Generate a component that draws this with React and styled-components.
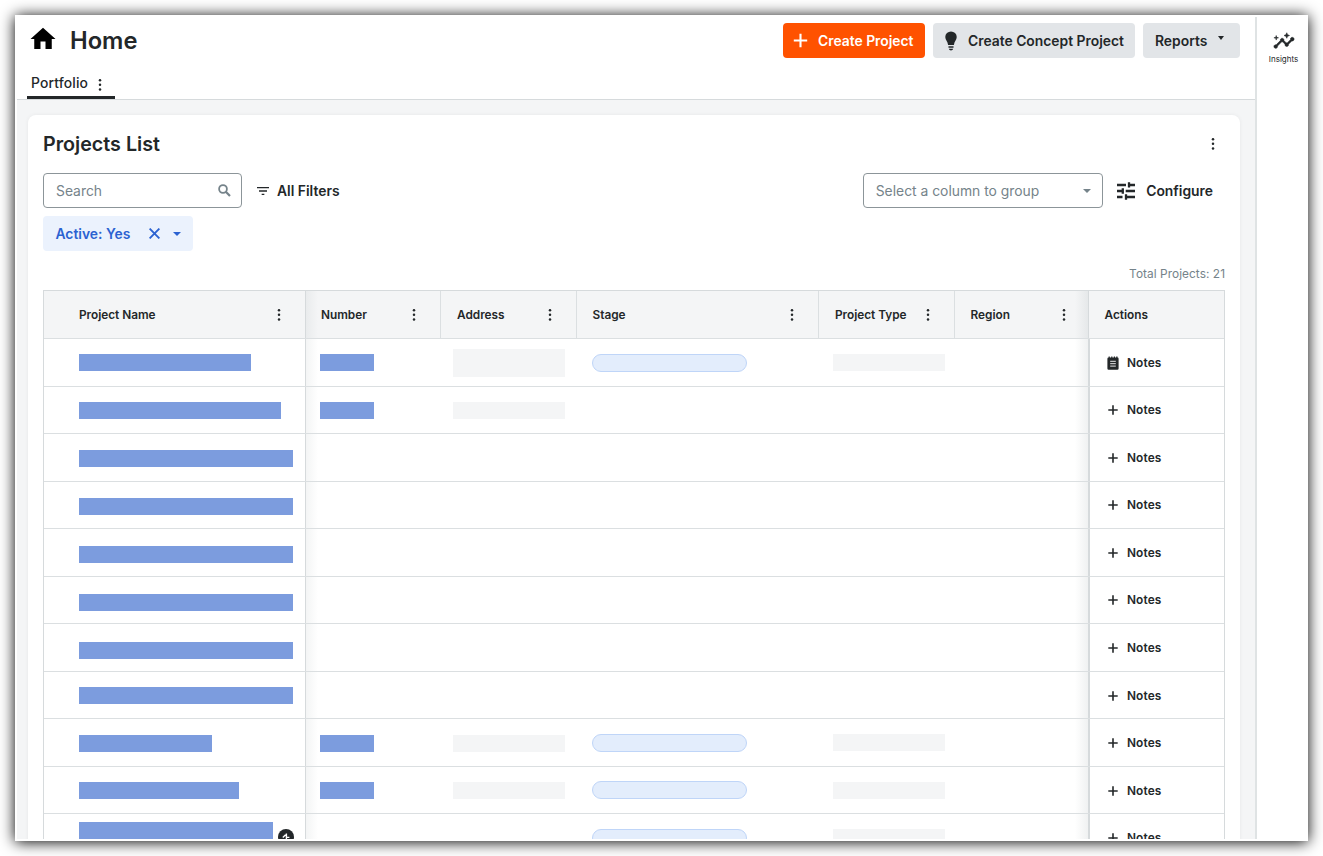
import styled, { createGlobalStyle } from "styled-components";
import { MdFilterList, MdHome, MdInsights } from "react-icons/md";

const GlobalStyle = createGlobalStyle`
  * {
    box-sizing: border-box;
  }

  body {
    margin: 0;
    background: #ffffff;
    color: #232729;
    font-family: Inter, "Liberation Sans", sans-serif;
    overflow: hidden;
  }

  svg {
    display: block;
    flex-shrink: 0;
  }
`;

const Page = styled.div`
  width: 1323px;
  height: 856px;
  padding: 15px;
  overflow: hidden;
`;

const Window = styled.div`
  width: 1293px;
  height: 826px;
  padding: 2px;
  background: #ffffff;
  box-shadow: 0 1px 14px #000000;
`;

const Screen = styled.div`
  display: flex;
  height: 822px;
  overflow: hidden;
`;

const Main = styled.main`
  width: 1238px;
  display: flex;
  flex-direction: column;
`;

const Header = styled.header`
  height: 83px;
  flex-shrink: 0;
  border-bottom: 1px solid #d6dadc;
  display: flex;
  justify-content: space-between;
`;

const HeaderLeft = styled.div`
  display: flex;
  flex-direction: column;
  justify-content: space-between;
  padding-left: 10px;
`;

const TitleRow = styled.div`
  display: flex;
  align-items: center;
  height: 47px;
`;

const HomeIcon = styled(MdHome)`
  color: #000000;
  margin: -4px 12px 0 1px;
`;

const PageTitle = styled.h1`
  margin: 0;
  font-size: 23.7px;
  font-weight: 600;
  line-height: 28px;
`;

const Tab = styled.div`
  width: 88px;
  height: 29px;
  padding-left: 4px;
  border-bottom: 3px solid #232729;
  display: flex;
  align-items: center;
  gap: 3px;
  font-size: 13.87px;
  font-weight: 500;
  letter-spacing: 0.15px;

  svg {
    margin-top: 3px;
  }
`;

const HeaderActions = styled.div`
  display: flex;
  gap: 8px;
  padding: 6px 15px 0 0;
`;

const Button = styled.button`
  width: ${(props) => props.$width}px;
  height: 35px;
  padding: 0 0 0 ${(props) => props.$pad}px;
  border: 0;
  border-radius: 4px;
  display: flex;
  align-items: center;
  gap: ${(props) => props.$gap}px;
  background: ${(props) => (props.$primary ? "#ff5200" : "#e2e5e8")};
  color: ${(props) => (props.$primary ? "#ffffff" : "#232729")};
  font-family: inherit;
  font-size: 13.87px;
  font-weight: 600;
  white-space: nowrap;
`;

const ReportsCaret = styled.span`
  margin: -5px 0 0 1px;
`;

const Content = styled.section`
  flex: 1;
  padding: 15px 15px 0 11px;
  background: #f4f5f6;
`;

const Card = styled.div`
  width: 1212px;
  height: 760px;
  padding: 16px 15px 0 15px;
  border-radius: 8px 8px 0 0;
  background: #ffffff;
  box-shadow: 0 0 4px rgba(35, 39, 41, 0.06);
`;

const CardHeader = styled.div`
  height: 26px;
  padding-right: 3px;
  display: flex;
  align-items: center;
  justify-content: space-between;
`;

const CardTitle = styled.h2`
  margin: 0;
  font-size: 19.7px;
  font-weight: 600;
  line-height: 26px;
`;

const Toolbar = styled.div`
  margin-top: 16px;
  height: 35px;
  padding-right: 12px;
  display: flex;
  align-items: center;
`;

const Field = styled.div`
  width: ${(props) => props.$width}px;
  height: 35px;
  padding: 0 ${(props) => props.$right || 11}px 0 12px;
  border: 1px solid #8c9599;
  border-radius: 4px;
  display: flex;
  align-items: center;
  justify-content: space-between;
  color: #75838a;
  font-size: 13.87px;
`;

const ToolButton = styled.div`
  display: flex;
  align-items: center;
  gap: ${(props) => props.$gap}px;
  margin-left: ${(props) => props.$offset}px;
  font-size: 13.87px;
  font-weight: 600;
`;

const Spacer = styled.div`
  flex: 1;
`;

const FilterChip = styled.div`
  width: 150px;
  height: 35px;
  margin-top: 8px;
  padding-left: 12.5px;
  border-radius: 4px;
  background: #ebf2fd;
  color: #2b62d1;
  display: flex;
  align-items: center;
  font-size: 13.87px;
  font-weight: 600;
`;

const ChipIcons = styled.span`
  display: flex;
  align-items: center;
  gap: 13px;
  margin-left: 18.5px;
`;

const Total = styled.div`
  margin-top: 15px;
  height: 16px;
  text-align: right;
  font-size: 11.87px;
  line-height: 16px;
  letter-spacing: 0.05px;
  color: #75838a;
`;

const Table = styled.div`
  margin-top: 8px;
  width: 1182px;
  border: 1px solid #d6dadc;
`;

const Row = styled.div`
  display: grid;
  grid-template-columns: 262px 135px 136px 242px 136px 133px 1fr;
  height: 47.55px;
  border-bottom: 1px solid #dbdfe1;
`;

const HeadRow = styled(Row)`
  height: 48px;
  background: #f4f5f6;
`;

const stickyEdges = {
  start: `
    border-right: 1px solid #d6dadc;
  `,
  afterStart: `
    background-image: linear-gradient(to right, rgba(60, 80, 85, 0.06), rgba(60, 80, 85, 0) 12px);
  `,
  beforeEnd: `
    border-right: 0;
    background-image: linear-gradient(to left, rgba(60, 80, 85, 0.08), rgba(60, 80, 85, 0) 13px);
  `,
  end: `
    border-right: 0;
    border-left: 1px solid #d6dadc;
  `,
};

const HeadCell = styled.div`
  display: flex;
  align-items: center;
  justify-content: space-between;
  padding: 0 ${(props) => props.$right || 17}px 0 ${(props) => props.$pad || 15.5}px;
  border-right: 1px solid #dbdfe1;
  font-size: 11.85px;
  font-weight: 600;
  letter-spacing: -0.03px;
  ${(props) => stickyEdges[props.$edge]}
`;

const Cell = styled.div`
  display: flex;
  align-items: flex-start;
  padding-left: ${(props) => props.$pad || 0}px;
  ${(props) => stickyEdges[props.$edge]}
`;

const ActionCell = styled.div`
  display: flex;
  align-items: center;
  gap: 7px;
  padding: 0.8px 0 0 16px;
  border-left: 2px solid #d6dadc;
  font-size: 11.87px;
  font-weight: 600;
  letter-spacing: 0.12px;
`;

const Block = styled.div`
  width: ${(props) => props.$width}px;
  height: ${(props) => props.$height || 17}px;
  margin-top: ${(props) => props.$top}px;
  background: ${(props) => (props.$link ? "#7c9cde" : "#f4f5f6")};
`;

const StagePill = styled.div`
  width: 155px;
  height: 18px;
  margin-top: 14.5px;
  border: 1px solid #bfd5f8;
  border-radius: 9px;
  background: #e3edfc;
`;

const Badge = styled.div`
  width: 16px;
  height: 16px;
  margin: 15px 0 0 5px;
`;

const Rail = styled.aside`
  width: 51px;
  border-left: 2px solid #dfe3e4;
  display: flex;
  flex-direction: column;
  align-items: center;
  padding: 13px 0 0 4px;
  font-size: 8px;
  line-height: 10px;
  gap: 2px;
`;

const InsightsIcon = styled(MdInsights)`
  path:not([fill="none"]) {
    stroke: currentColor;
    stroke-width: 0.6px;
  }
`;

const DotsIcon = () => (
  <svg width="18" height="18" viewBox="0 0 18 18" fill="currentColor">
    <circle cx="9" cy="4.2" r="1.25" />
    <circle cx="9" cy="8.8" r="1.25" />
    <circle cx="9" cy="13.4" r="1.25" />
  </svg>
);

const PlusIcon = ({ size, reach, weight }) => (
  <svg width={size} height={size} viewBox={`${-size / 2} ${-size / 2} ${size} ${size}`}>
    <path
      d={`M${-reach} 0H${reach}M0 ${-reach}V${reach}`}
      stroke="currentColor"
      strokeWidth={weight}
    />
  </svg>
);

const BulbIcon = () => (
  <svg width="14" height="20" viewBox="0 0 14 20.6" fill="currentColor">
    <path d="M7 0.4A5.9 5.9 0 0 0 1.1 6.3C1.1 9.3 3.6 10.8 4 14.4H10C10.4 10.8 12.9 9.3 12.9 6.3A5.9 5.9 0 0 0 7 0.4Z" />
    <path d="M4.4 15.8h5.2v1.4H4.4zM4.8 18.4h4.4c-.3 1.1-1.1 1.7-2.2 1.7s-1.9-.6-2.2-1.7z" />
  </svg>
);

const SearchIcon = () => (
  <svg width="13" height="13" viewBox="0 0 13 13" fill="none" stroke="currentColor">
    <circle cx="5" cy="5" r="3.9" strokeWidth="1.8" />
    <path d="M7.8 7.8l4.2 4.2" strokeWidth="2.2" />
  </svg>
);

const CloseIcon = () => (
  <svg width="11" height="11" viewBox="0 0 11 11" stroke="currentColor" strokeWidth="1.9">
    <path d="M0.6 0.6l9.8 9.8M10.4 0.6L0.6 10.4" />
  </svg>
);

const TuneIcon = () => (
  <svg width="18" height="18" viewBox="0 0 18 18" stroke="currentColor" strokeWidth="2.3">
    <path d="M0 3h9M12 3h6M0 9h6M8.7 9H18M0 15h5.5M9 15h9" />
    <path d="M12 0.2v5.4M5.8 6.2v5.6M9 12.2v5.6" />
  </svg>
);

const NotesIcon = () => (
  <svg width="14" height="16" viewBox="0 0 14 16">
    <path
      d="M1.4 3.8Q1.4 2.6 2.6 2.6V1.4h1.2v1.2h1.4V1.4h1.2v1.2h1.4V1.4H9v1.2h1.2V1.4h1.3v1.2q1.1 0 1.1 1.2v9.6q0 1.3-1.2 1.3H2.6q-1.2 0-1.2-1.3z"
      fill="#232729"
    />
    <path d="M4.2 6.3h5.6M4.2 8.7h5.6M4.2 11.1h5.6" stroke="#ffffff" strokeWidth="0.9" />
  </svg>
);

const Caret = ({ width = 8 }) => (
  <svg width={width} height="4" viewBox="0 0 8 4" preserveAspectRatio="none" fill="currentColor">
    <path d="M0 0h8L4 4z" />
  </svg>
);

const columns = [
  { label: "Project Name", pad: 35, right: 17.5, edge: "start" },
  { label: "Number", pad: 15, edge: "afterStart" },
  { label: "Address", pad: 16 },
  { label: "Stage" },
  { label: "Project Type", pad: 16 },
  { label: "Region", right: 15.5, edge: "beforeEnd" },
];

// top is the distance from the row's upper line to the link blocks
const rows = [
  { name: 172, top: 15, number: true, address: 28, stage: true, type: true, hasNotes: true },
  { name: 202, top: 15.5, number: true, address: 17 },
  { name: 214, top: 16 },
  { name: 214, top: 16.4 },
  { name: 214, top: 16.8 },
  { name: 214, top: 17.3 },
  { name: 214, top: 17.7 },
  { name: 214, top: 15.2 },
  { name: 133, top: 15.2, number: true, address: 17, stage: true, type: true },
  { name: 160, top: 15.1, number: true, address: 17, stage: true, type: true },
  { name: 194, top: 7.5, stage: true, type: true, badge: true },
];

const ProjectRow = ({ row }) => (
  <Row>
    <Cell $pad={35} $edge="start">
      <Block $link $width={row.name} $top={row.top} />
      {row.badge && (
        <Badge>
          <svg width="16" height="16" viewBox="0 0 16 16">
            <circle cx="8" cy="8" r="8" fill="#232729" />
            <path d="M8.4 4.4v7.4M4.8 8.4l2.8-2.6M8.4 8.4h3" stroke="#ffffff" strokeWidth="1.4" />
          </svg>
        </Badge>
      )}
    </Cell>
    <Cell $pad={14} $edge="afterStart">
      {row.number && <Block $link $width={54} $top={row.top} />}
    </Cell>
    <Cell $pad={12}>
      {row.address && (
        <Block $width={112} $height={row.address} $top={row.address > 17 ? 10 : row.top} />
      )}
    </Cell>
    <Cell $pad={15.3}>{row.stage && <StagePill />}</Cell>
    <Cell $pad={14}>{row.type && <Block $width={112} $top={15} />}</Cell>
    <Cell $edge="beforeEnd" />
    <ActionCell>
      {row.hasNotes ? <NotesIcon /> : <PlusIcon size={14} reach={4.7} weight={1.6} />}
      Notes
    </ActionCell>
  </Row>
);

const ProjectsTable = () => (
  <Table>
    <HeadRow>
      {columns.map((column) => (
        <HeadCell
          key={column.label}
          $pad={column.pad}
          $right={column.right}
          $edge={column.edge}
        >
          {column.label}
          <DotsIcon />
        </HeadCell>
      ))}
      <HeadCell $edge="end">Actions</HeadCell>
    </HeadRow>
    {rows.map((row, index) => (
      <ProjectRow key={index} row={row} />
    ))}
  </Table>
);

const PageHeader = () => (
  <Header>
    <HeaderLeft>
      <TitleRow>
        <HomeIcon size={30} />
        <PageTitle>Home</PageTitle>
      </TitleRow>
      <Tab>
        Portfolio
        <DotsIcon />
      </Tab>
    </HeaderLeft>
    <HeaderActions>
      <Button $primary $width={142} $pad={10} $gap={10}>
        <PlusIcon size={15} reach={6.7} weight={2.1} />
        Create Project
      </Button>
      <Button $width={202} $pad={11} $gap={10}>
        <BulbIcon />
        Create Concept Project
      </Button>
      <Button $width={97} $pad={12} $gap={10}>
        Reports
        <ReportsCaret>
          <Caret width={6} />
        </ReportsCaret>
      </Button>
    </HeaderActions>
  </Header>
);

export default function App() {
  return (
    <>
      <GlobalStyle />
      <Page>
        <Window>
          <Screen>
            <Main>
              <PageHeader />
              <Content>
                <Card>
                  <CardHeader>
                    <CardTitle>Projects List</CardTitle>
                    <DotsIcon />
                  </CardHeader>
                  <Toolbar>
                    <Field $width={199} $right={10}>
                      Search
                      <SearchIcon />
                    </Field>
                    <ToolButton $offset={13} $gap={6}>
                      <MdFilterList size={16} />
                      All Filters
                    </ToolButton>
                    <Spacer />
                    <Field $width={240.5}>
                      Select a column to group
                      <Caret />
                    </Field>
                    <ToolButton $offset={13.5} $gap={11.5}>
                      <TuneIcon />
                      Configure
                    </ToolButton>
                  </Toolbar>
                  <FilterChip>
                    Active: Yes
                    <ChipIcons>
                      <CloseIcon />
                      <Caret />
                    </ChipIcons>
                  </FilterChip>
                  <Total>Total Projects: 21</Total>
                  <ProjectsTable />
                </Card>
              </Content>
            </Main>
            <Rail>
              <InsightsIcon size={22} />
              Insights
            </Rail>
          </Screen>
        </Window>
      </Page>
    </>
  );
}
